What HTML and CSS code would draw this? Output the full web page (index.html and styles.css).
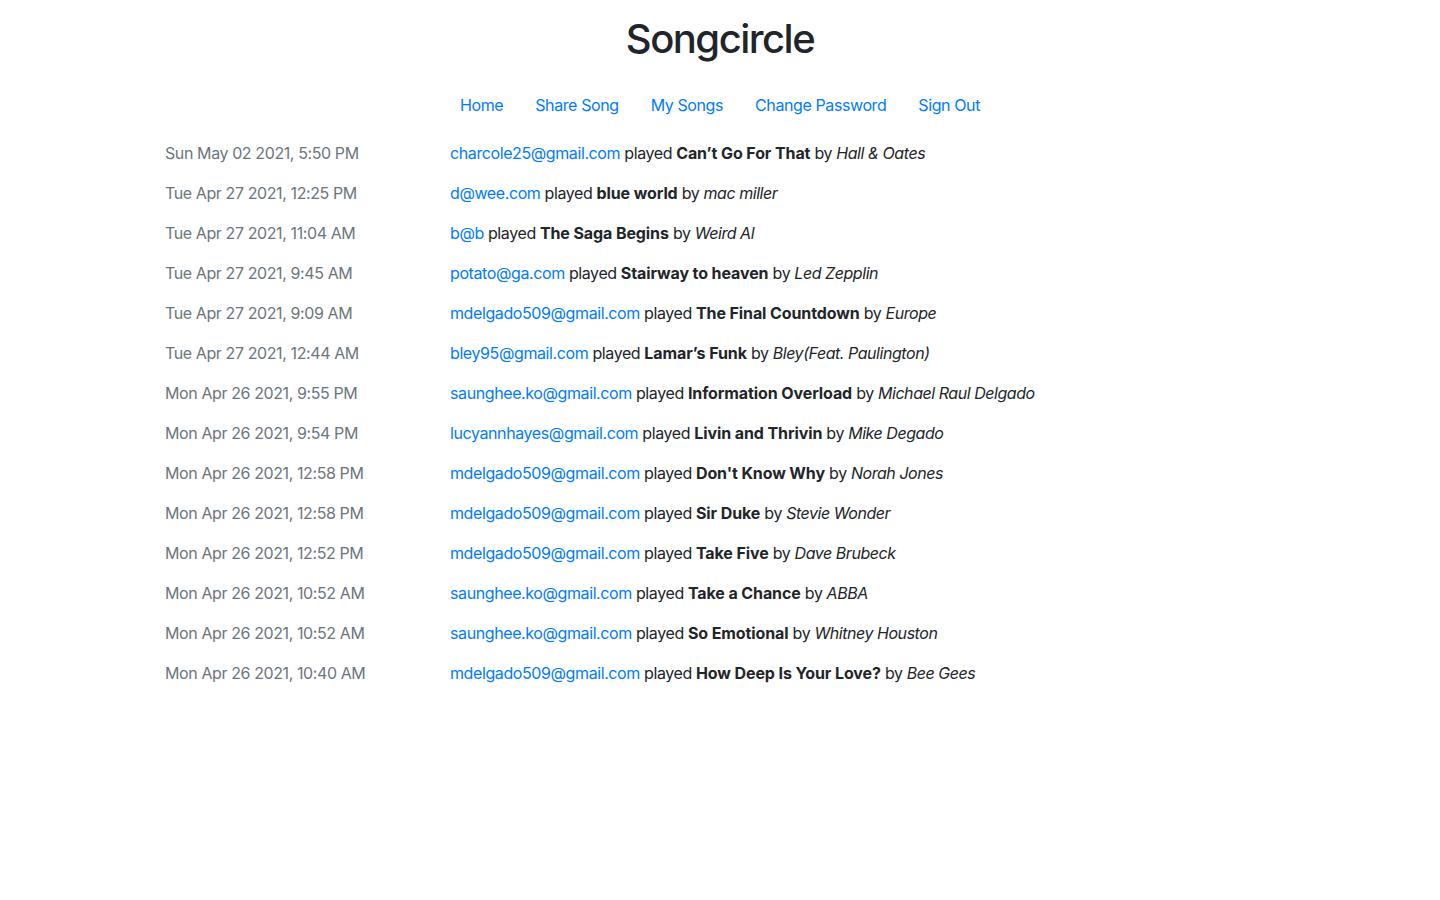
FILE: index.html
```html
<!DOCTYPE html>
<html lang="en">
<head>
<meta charset="utf-8">
<title>Songcircle</title>
<link rel="stylesheet" href="styles.css">
</head>
<body>
<div class="container">
  <header class="header">
    <h1 class="title">Songcircle</h1>
    <nav class="nav">
      <a class="nav-link" href="#">Home</a>
      <a class="nav-link" href="#">Share Song</a>
      <a class="nav-link" href="#">My Songs</a>
      <a class="nav-link" href="#">Change Password</a>
      <a class="nav-link" href="#">Sign Out</a>
    </nav>
  </header>
  <main class="feed">
    <div class="row"><div class="date">Sun May 02 2021, 5:50 PM</div><div class="entry"><a href="#">charcole25@gmail.com</a> played <b>Can’t Go For That</b> by <i>Hall &amp; Oates</i></div></div>
    <div class="row"><div class="date">Tue Apr 27 2021, 12:25 PM</div><div class="entry"><a href="#">d@wee.com</a> played <b>blue world</b> by <i>mac miller</i></div></div>
    <div class="row"><div class="date">Tue Apr 27 2021, 11:04 AM</div><div class="entry"><a href="#">b@b</a> played <b>The Saga Begins</b> by <i>Weird Al</i></div></div>
    <div class="row"><div class="date">Tue Apr 27 2021, 9:45 AM</div><div class="entry"><a href="#">potato@ga.com</a> played <b>Stairway to heaven</b> by <i>Led Zepplin</i></div></div>
    <div class="row"><div class="date">Tue Apr 27 2021, 9:09 AM</div><div class="entry"><a href="#">mdelgado509@gmail.com</a> played <b>The Final Countdown</b> by <i>Europe</i></div></div>
    <div class="row"><div class="date">Tue Apr 27 2021, 12:44 AM</div><div class="entry"><a href="#">bley95@gmail.com</a> played <b>Lamar’s Funk</b> by <i>Bley(Feat. Paulington)</i></div></div>
    <div class="row"><div class="date">Mon Apr 26 2021, 9:55 PM</div><div class="entry"><a href="#">saunghee.ko@gmail.com</a> played <b>Information Overload</b> by <i>Michael Raul Delgado</i></div></div>
    <div class="row"><div class="date">Mon Apr 26 2021, 9:54 PM</div><div class="entry"><a href="#">lucyannhayes@gmail.com</a> played <b>Livin and Thrivin</b> by <i>Mike Degado</i></div></div>
    <div class="row"><div class="date">Mon Apr 26 2021, 12:58 PM</div><div class="entry"><a href="#">mdelgado509@gmail.com</a> played <b>Don't Know Why</b> by <i>Norah Jones</i></div></div>
    <div class="row"><div class="date">Mon Apr 26 2021, 12:58 PM</div><div class="entry"><a href="#">mdelgado509@gmail.com</a> played <b>Sir Duke</b> by <i>Stevie Wonder</i></div></div>
    <div class="row"><div class="date">Mon Apr 26 2021, 12:52 PM</div><div class="entry"><a href="#">mdelgado509@gmail.com</a> played <b>Take Five</b> by <i>Dave Brubeck</i></div></div>
    <div class="row"><div class="date">Mon Apr 26 2021, 10:52 AM</div><div class="entry"><a href="#">saunghee.ko@gmail.com</a> played <b>Take a Chance</b> by <i>ABBA</i></div></div>
    <div class="row"><div class="date">Mon Apr 26 2021, 10:52 AM</div><div class="entry"><a href="#">saunghee.ko@gmail.com</a> played <b>So Emotional</b> by <i>Whitney Houston</i></div></div>
    <div class="row"><div class="date">Mon Apr 26 2021, 10:40 AM</div><div class="entry"><a href="#">mdelgado509@gmail.com</a> played <b>How Deep Is Your Love?</b> by <i>Bee Gees</i></div></div>
  </main>
</div>
</body>
</html>
```

FILE: styles.css
```css
* { box-sizing: border-box; }
html, body { margin: 0; padding: 0; background: #fff; }
body {
  font-family: Inter, Roboto, "Liberation Sans", sans-serif;
  font-size: 16px;
  line-height: 24px;
  letter-spacing: -0.4px;
  color: #212529;
}
.container {
  max-width: 1140px;
  margin: 0 auto;
  padding: 0 15px;
}
.header {
  display: flex;
  flex-direction: column;
  align-items: center;
  padding-top: 15px;
}
.title {
  margin: 0;
  font-size: 40px;
  line-height: 48px;
  font-weight: 500;
  letter-spacing: -1.5px;
}
.nav {
  display: flex;
  justify-content: center;
  margin-top: 22px;
}
.nav-link {
  display: block;
  padding: 8px 16px;
  color: #007bff;
  text-decoration: none;
}
.feed {
  margin-top: 16px;
  display: flex;
  flex-direction: column;
  gap: 16px;
}
.row {
  display: grid;
  grid-template-columns: 285px 1fr;
}
.date { color: #6c757d; }
.entry a { color: #007bff; text-decoration: none; }
.entry b { font-weight: 700; letter-spacing: -0.1px; }
.entry i { letter-spacing: -0.45px; }
```
